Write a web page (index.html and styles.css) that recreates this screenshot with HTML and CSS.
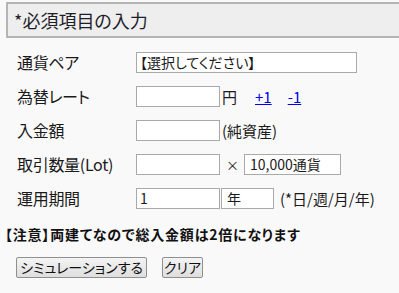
FILE: index.html
```html
<!DOCTYPE html>
<html lang="ja">
<head>
<meta charset="utf-8">
<link rel="stylesheet" href="styles.css">
</head>
<body>
<div class="header">*必須項目の入力</div>
<div class="form">
  <div class="row">
    <div class="label">通貨ペア</div>
    <div class="field wide">【選択してください】</div>
  </div>
  <div class="row">
    <div class="label">為替レート</div>
    <div class="field mid"></div>
    <span class="unit">円</span>
    <a class="step first" href="#">+1</a>
    <a class="step" href="#">-1</a>
  </div>
  <div class="row">
    <div class="label">入金額</div>
    <div class="field mid"></div>
    <span class="unit">(純資産)</span>
  </div>
  <div class="row">
    <div class="label">取引数量(Lot)</div>
    <div class="field mid"></div>
    <span class="times">×</span>
    <div class="field lot">10,000通貨</div>
  </div>
  <div class="row">
    <div class="label">運用期間</div>
    <div class="field mid">1</div>
    <div class="field year">年</div>
    <span class="hint">(*日/週/月/年)</span>
  </div>
</div>
<p class="note">【注意】両建てなので総入金額は2倍になります</p>
<div class="buttons">
  <button class="btn sim">シミュレーションする</button>
  <button class="btn clear">クリア</button>
</div>
</body>
</html>
```
FILE: styles.css
```css
html, body {
  margin: 0;
  padding: 0;
  background: #f9f9f9;
}
body {
  font-family: "Noto Sans CJK JP", "Noto Sans", sans-serif;
  font-feature-settings: "palt";
  color: #1a1a1a;
  width: 399px;
  height: 293px;
  overflow: hidden;
}
.header {
  margin: 2px 0 0 6px;
  height: 32px;
  border: 2px solid #b4b4b4;
  border-right: none;
  background: #eeeeee;
  font-size: 18px;
  line-height: 32px;
  padding-left: 6px;
  color: #1e1e2a;
}
.form {
  padding-top: 7px;
}
.row {
  display: flex;
  align-items: center;
  height: 34px;
  padding-left: 17px;
  font-size: 15px;
}
.label {
  width: 119px;
  flex: none;
  font-size: 16px;
  letter-spacing: -0.3px;
}
.field {
  box-sizing: border-box;
  height: 21px;
  border: 1px solid #a9a9a9;
  background: #fff;
  font-size: 14px;
  line-height: 19px;
  padding-left: 3px;
  white-space: nowrap;
  overflow: hidden;
}
.wide { width: 221px; }
.mid { width: 84px; }
.lot { width: 97px; padding-left: 5px; }
.year { width: 53px; margin-left: 1px; padding-left: 5px; }
.unit {
  margin-left: 2px;
  font-size: 15px;
}
.step {
  color: #0000ee;
  text-decoration: underline;
  font-size: 15px;
  margin-left: 16px;
}
.step.first { margin-left: 18px; }
.times {
  margin: 0 5px 0 6px;
  font-size: 13px;
}
.hint {
  margin-left: 6px;
  font-size: 15px;
}
.note {
  margin: 9px 0 0 5px;
  font-size: 14px;
  line-height: 20px;
  font-weight: bold;
  letter-spacing: 0.8px;
  color: #111;
}
.buttons {
  display: flex;
  gap: 15px;
  margin: 13px 0 0 16px;
}
.btn {
  box-sizing: border-box;
  height: 21px;
  padding: 0 1px;
  white-space: nowrap;
  font-family: "Noto Sans CJK JP", sans-serif;
  font-feature-settings: "palt";
  font-size: 14px;
  line-height: 17px;
  color: #111;
  background: linear-gradient(#f4f4f4, #dedede);
  border: 1px solid #8f8f8f;
  border-radius: 2px;
}
.sim { width: 131px; }
.clear { width: 41px; }
```
